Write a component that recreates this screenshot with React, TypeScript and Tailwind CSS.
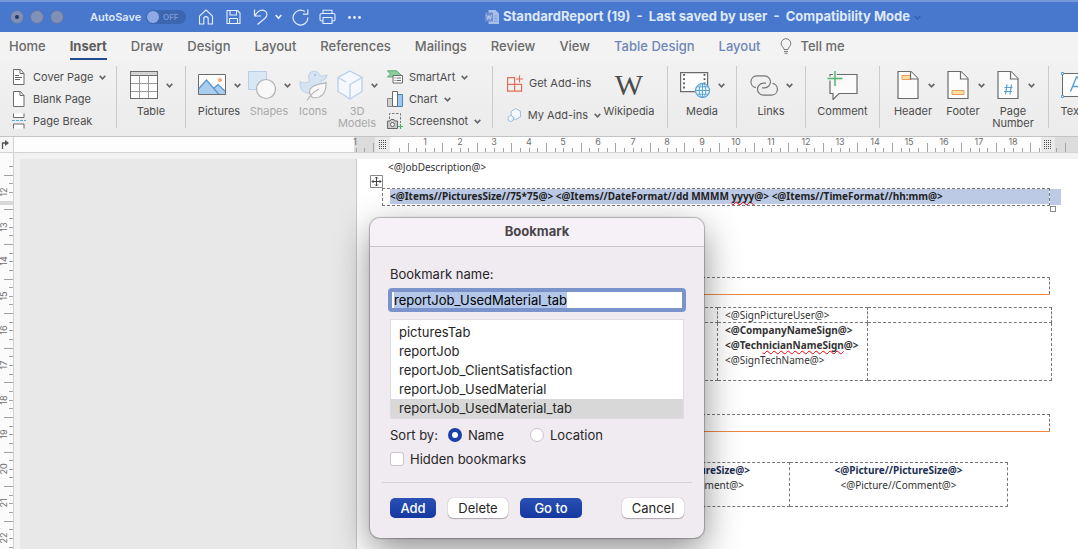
import { useEffect, useRef, useState, type ReactNode } from "react";

const tabs = [
  "Home",
  "Insert",
  "Draw",
  "Design",
  "Layout",
  "References",
  "Mailings",
  "Review",
  "View",
];

const bookmarks = [
  "picturesTab",
  "reportJob",
  "reportJob_ClientSatisfaction",
  "reportJob_UsedMaterial",
  "reportJob_UsedMaterial_tab",
];

const CM = 34.6;

function Chevron() {
  return (
    <svg width="7" height="5" viewBox="0 0 7 5" fill="none" stroke="#666" strokeWidth="1.6" className="shrink-0">
      <path d="M.7.9 3.5 3.8 6.3.9" />
    </svg>
  );
}

function TitleBar() {
  return (
    <header className="flex h-8 items-center border-t-2 border-[#7397d8] bg-[#4878cd] pl-2.5 text-[#dfe8f8]">
      <div className="flex gap-1.5">
        {["Close", "Minimize", "Zoom"].map((name, i) => (
          <button
            key={name}
            aria-label={name}
            className="flex size-3.5 items-center justify-center rounded-full border border-[#5d75a6] bg-[#8091b8]"
          >
            {i === 0 && <span className="size-1 rounded-full bg-[#26385f]" />}
          </button>
        ))}
      </div>
      <span className="ml-6.5 w-14 text-[11px] font-semibold">AutoSave</span>
      <button
        role="switch"
        aria-checked="false"
        aria-label="AutoSave"
        className="flex h-3.5 w-10 items-center rounded-full bg-[#3d66b0] text-[8px] font-medium text-[#7f9fdc]"
      >
        <span className="mr-1 ml-px size-3 rounded-full bg-[#8eaae4]" />
        OFF
      </button>
      <div className="flex items-center">
        <button aria-label="Home" className="ml-3">
          <svg width="16" height="16" viewBox="0 0 16 16" fill="none" stroke="#e6eefb" strokeWidth="1.1">
            <path d="M1.5 7.2 8 1l6.5 6.2V15h-4.3V9.8a2.2 2.2 0 0 0-4.4 0V15H1.5z" strokeLinejoin="round" />
          </svg>
        </button>
        <button aria-label="Save" className="ml-3">
          <svg width="15" height="16" viewBox="0 0 15 16" fill="none" stroke="#e6eefb" strokeWidth="1.1">
            <path d="M1 1.5h10.5L14 4v10.5H1zM4 1.5V6h6.5V1.5M3.5 14.5v-5h8v5" strokeLinejoin="round" />
          </svg>
        </button>
        <button aria-label="Undo" className="ml-3">
          <svg width="16" height="18" viewBox="0 0 16 18" fill="none" stroke="#e6eefb" strokeWidth="1.2">
            <path d="M1.5 1.5V8H8M1.7 7.8C4.5 3.5 8.5 1 11.8 2.8c3 1.7 2.6 5.2.2 7.4l-7.5 6.300" />
          </svg>
        </button>
        <button aria-label="Undo history" className="ml-1.5">
          <svg width="7" height="6" viewBox="0 0 7 6" fill="none" stroke="#e6eefb" strokeWidth="1.6">
            <path d="M.7 1 3.5 4.2 6.3 1" />
          </svg>
        </button>
        <button aria-label="Redo" className="ml-2.5">
          <svg width="17" height="17" viewBox="0 0 17 17" fill="none" stroke="#e6eefb" strokeWidth="1.2">
            <path d="M12.8 2.6A7.4 7.4 0 1 0 15.9 8.5M11 5.2h4.8V.5" />
          </svg>
        </button>
        <button aria-label="Print" className="ml-2.5">
          <svg width="17" height="16" viewBox="0 0 17 16" fill="none" stroke="#e6eefb" strokeWidth="1.1">
            <path d="M4 4.5V1.2h9v3.3M4 12H2.5A1.5 1.5 0 0 1 1 10.5V6a1.5 1.5 0 0 1 1.5-1.5h12A1.5 1.5 0 0 1 16 6v4.5a1.5 1.5 0 0 1-1.5 1.5H13M4 8.5h9v6H4z" />
          </svg>
        </button>
        <button aria-label="More" className="ml-3">
          <svg width="13" height="3" viewBox="0 0 13 3" fill="#e6eefb">
            <circle cx="1.5" cy="1.5" r="1.4" />
            <circle cx="6.5" cy="1.5" r="1.4" />
            <circle cx="11.5" cy="1.5" r="1.4" />
          </svg>
        </button>
      </div>
      <div className="ml-31 flex items-center whitespace-pre">
        <svg width="14" height="14" viewBox="0 0 14 14" className="mr-1">
          <path d="M3.5 0h7L14 3.5V14H3.5z" fill="#a9bfe9" />
          <path d="M9 6h3.500M9 8.5h3.500M9 11h3.500" stroke="#7d9bd9" />
          <path d="M0 2.5h8v9H0z" fill="#6d8fd4" />
          <path d="m1.5 5 1.2 4.300L4 5.500l1.300 3.800L6.500 5" fill="none" stroke="#c3d3f2" strokeWidth=".9" />
        </svg>
        <h1 className="text-[13px] font-bold">
          StandardReport (19)  -  Last saved by user  -  Compatibility Mode
        </h1>
        <svg width="7" height="5" viewBox="0 0 7 5" fill="none" stroke="#3460b3" strokeWidth="1.5" className="ml-1">
          <path d="M.7.9 3.5 3.8 6.3.9" />
        </svg>
      </div>
    </header>
  );
}

function TabBar() {
  return (
    <nav className="flex h-7 items-start gap-6 bg-[#f3f3f3] pt-1 pl-[9px] text-[13px] leading-5 font-medium text-[#6a6a6a]">
      {tabs.map((tab) => (
        <a
          key={tab}
          href="#ribbon"
          className={
            tab === "Insert"
              ? "border-b-3 border-[#234a8e] pb-0.5 font-bold text-[#5c5c5c]"
              : ""
          }
        >
          {tab}
        </a>
      ))}
      <a href="#ribbon" className="whitespace-nowrap text-[#6f86b8]">Table Design</a>
      <a href="#ribbon" className="text-[#6f86b8]">Layout</a>
      <a href="#ribbon" className="-ml-1 flex items-center gap-2 whitespace-nowrap">
        <svg width="12" height="16" viewBox="0 0 12 16" fill="none" stroke="#777" strokeWidth="1">
          <path d="M4 11.5c0-2-2.8-3-2.8-6a4.8 4.8 0 0 1 9.6 0c0 3-2.8 4-2.8 6zM4 13.5h4M4.5 15.3h3" />
        </svg>
        Tell me
      </a>
    </nav>
  );
}

function BigButton({
  icon,
  label,
  arrow = true,
  faded = false,
  className = "w-[50px]",
}: {
  icon: ReactNode;
  label: string;
  arrow?: boolean;
  faded?: boolean;
  className?: string;
}) {
  return (
    <button className={`flex shrink-0 flex-col items-center pt-[3px] ${faded ? "text-[#a9a9a9]" : ""} ${className}`}>
      <span className="flex h-8 shrink-0 items-center gap-2">
        {icon}
        {arrow && <Chevron />}
      </span>
      <span className="mt-1 text-center leading-3">{label}</span>
    </button>
  );
}

function SmallButton({ icon, label, arrow = false }: { icon: ReactNode; label: string; arrow?: boolean }) {
  return (
    <button className="flex h-[22px] shrink-0 items-center gap-1.5 whitespace-nowrap">
      {icon}
      {label}
      {arrow && <Chevron />}
    </button>
  );
}

function Separator() {
  return <div className="w-px shrink-0 self-stretch bg-[#cbcbcb]" />;
}

function DocIcon({ children }: { children?: ReactNode }) {
  return (
    <svg width="28" height="30" viewBox="-5 0 28 30" fill="none" className="shrink-0">
      <path d="M1 1.5h13l7 7v20H1z" fill="#fcfcfc" stroke="#6b6b6b" strokeWidth="1.2" />
      {children}
      <path d="M13.500 1.500v7.500H21" fill="#fcfcfc" stroke="#6b6b6b" strokeWidth="1.2" />
    </svg>
  );
}

function Ribbon() {
  return (
    <div id="ribbon" className="overflow-hidden border-b border-[#c4c4c4] bg-linear-to-b from-[#f2f2f2] to-[#ebebeb] pt-1.5 pb-2 text-[11px] text-[#4c4c4c]">
      <div className="flex h-[62px]">
        <div className="flex w-[116px] shrink-0 flex-col pl-3">
          <SmallButton
            arrow
            icon={
              <svg width="15" height="16" viewBox="2 0 15 16" fill="none" stroke="#6b6b6b">
                <path d="M3.5.5h7l3.5 4v11H3.500z" fill="#fff" />
                <path d="M10 .5v4h4M5 6.5h4M5 8.5h7M5 10.5h5" />
              </svg>
            }
            label="Cover Page"
          />
          <SmallButton
            icon={
              <svg width="15" height="16" viewBox="2 0 15 16" fill="none" stroke="#6b6b6b">
                <path d="M3.5.5h7l3.5 4v11H3.500z" fill="#fff" />
                <path d="M10 .5v4h4" />
              </svg>
            }
            label="Blank Page"
          />
          <SmallButton
            icon={
              <svg width="15" height="16" viewBox="2 0 15 16" fill="none" stroke="#6b6b6b">
                <path d="M3.5.5v4H14v-4M3.5 15.5V11H14v4.500" fill="#fff" />
                <path d="M2 7.5h14" stroke="#57a9d8" strokeDasharray="3 1" />
              </svg>
            }
            label="Page Break"
          />
        </div>
        <Separator />
        <div className="flex w-[68px] shrink-0 justify-center">
          <BigButton
            label="Table"
            icon={
              <svg width="28" height="28" viewBox="0 0 28 28" fill="none" stroke="#6b6b6b">
                <path d="M.5.5h27v27H.5z" fill="#fdfdfd" />
                <path d="M.5.5h27v4H.5z" fill="#d4d6d3" />
                <path d="M.5 12.5h27M.5 20.5h27M9.5 4.500v23M18.500 4.500v23" stroke="#999" />
                <path d="M.5.5h27v27H.5z" />
              </svg>
            }
          />
        </div>
        <Separator />
        <div className="flex w-[306px] shrink-0 pl-2">
          <BigButton
            label="Pictures"
            icon={
              <svg width="28" height="22" viewBox="0 0 28 22" fill="none">
                <path d="M.5.5h27v20H.5z" fill="#fdfdfd" />
                <path d="M.5 15l8-9 7.500 8 4-3.500 7.500 6.500v3.500H.5z" fill="#a9cdee" />
                <path d="M.5 15l8-9L21 20.500M16 14l4-3.500 7.500 7" stroke="#5a94cc" strokeWidth="1.2" />
                <circle cx="22" cy="6" r="2" fill="#f5a873" />
                <path d="M.5.5h27v20H.5z" stroke="#6b6b6b" />
              </svg>
            }
          />
          <BigButton
            faded
            label="Shapes"
            icon={
              <svg width="28" height="29" viewBox="0 0 28 29">
                <path d="M.5.5h18v18H.5z" fill="#d9e6f4" stroke="#b9cee6" />
                <circle cx="18" cy="18" r="9.5" fill="#f8f8f8" stroke="#b4b4b4" strokeWidth="1.2" />
              </svg>
            }
          />
          <BigButton
            faded
            label="Icons"
            arrow={false}
            className="w-[38px]"
            icon={
              <svg width="29" height="31" viewBox="0 0 29 31" strokeWidth="1.1">
                <path
                  d="M1 11.5c2 1.5 5.500 1.500 8.500.5 1.500-.5 1.300-1.500.6-2.600C8.600 6 10.500 1.300 15 1.300c3 0 5 1.700 6 4.500 2.600.5 5.500 0 7-.7-.4 3-2.600 5-5.700 5.600-.6 2.400 1 4 .7 6.500-.5 4-4 6-8 6H9.500C4 23.200.5 18.500 1 11.500z"
                  fill="#d5e3f2"
                  stroke="#c0d3e8"
                />
                <circle cx="16" cy="5" r=".9" fill="#9ab5d3" />
                <path
                  d="M27 12.5c-3 2-15.500 1-16.500 9 0 2.500 1 4.500 3 6 8 1.500 14-3.500 13.500-15z"
                  fill="#f7f7f7"
                  stroke="#b4b4b4"
                />
                <path d="M8 30.5c3-5 7-9 12-11.500" fill="none" stroke="#b4b4b4" />
              </svg>
            }
          />
          <BigButton
            faded
            label="3D Models"
            icon={
              <svg width="26" height="30" viewBox="0 0 26 30" fill="none" stroke="#b9d0e8" strokeWidth="1.3">
                <path d="M13 1 25 7.500v14L13 29 1 21.500v-14z" fill="#f4f7fb" />
                <path d="M13 29V14.500L25 7.500M1 7.500 9 12" />
              </svg>
            }
          />
          <div className="ml-[5px] flex flex-col">
            <SmallButton
              arrow
              label="SmartArt"
              icon={
                <svg width="16" height="14" viewBox="0 0 16 14" fill="none">
                  <path d="M.5.8h9L14 5l-4.500 2H.5l3-3z" fill="#8ccf9f" stroke="#58ab70" />
                  <path d="M6 5.500h9.500v7.500H6z" fill="#fff" stroke="#6b6b6b" />
                  <path d="M7.500 8h1M9.500 8h4.500M7.500 10.500h1M9.500 10.500h4.500" stroke="#6b6b6b" />
                </svg>
              }
            />
            <SmallButton
              arrow
              label="Chart"
              icon={
                <svg width="16" height="16" viewBox="0 0 16 16">
                  <path d="M.5 7.5h5v8h-5z" fill="#cfd1cf" stroke="#888" />
                  <path d="M10.5 3.5h5v12h-5z" fill="#9cc8ef" stroke="#4a86c0" />
                  <path d="M5.5.5h5v15h-5z" fill="#fff" stroke="#6b6b6b" />
                </svg>
              }
            />
            <SmallButton
              arrow
              label="Screenshot"
              icon={
                <svg width="16" height="16" viewBox="0 0 16 16" fill="none">
                  <path d="M2.5 6V.5h11V10" stroke="#777" strokeDasharray="2.5 1.5" />
                  <path d="M.5 8H3l1-1.500h3L8 8h2.500v7.500H.5z" fill="#c9c9c9" stroke="#666" />
                  <circle cx="5.5" cy="11.5" r="2" fill="#fff" stroke="#666" />
                  <path d="M13.500 11v5M11 13.500h5" stroke="#45b06a" strokeWidth="1.2" />
                </svg>
              }
            />
          </div>
        </div>
        <Separator />
        <div className="flex w-[174px] shrink-0 pl-3.5">
          <div className="flex w-[94px] shrink-0 flex-col gap-2.5 pt-1.5">
            <SmallButton
              label="Get Add-ins"
              icon={
                <svg width="16" height="17" viewBox="0 0 16 17" fill="none" stroke="#e0705a" strokeWidth="1.2">
                  <path d="M.6 2.6h7v13.500h-7zM.6 9.300h14v6.800H.6zM12.500.5v7M9 4h7" />
                </svg>
              }
            />
            <SmallButton
              arrow
              label="My Add-ins"
              icon={
                <svg width="16" height="16" viewBox="0 0 16 16" fill="#f5f9fd" stroke="#8fb6df">
                  <path d="m9.500 1 5.200 3v6L9.500 13l-5-3V4z" />
                  <path d="m4 8.500 2.900 1.700v3.400L4 15.300l-2.800-1.700v-3.400z" />
                </svg>
              }
            />
          </div>
          <BigButton
            label="Wikipedia"
            arrow={false}
            className="w-[56px]"
            icon={<span className="font-['Liberation_Serif',serif] text-[30px] leading-7">W</span>}
          />
        </div>
        <Separator />
        <div className="flex w-[68px] shrink-0 justify-center">
          <BigButton
            label="Media"
            icon={
              <svg width="30" height="26" viewBox="0 0 30 26" fill="none">
                <path d="M.6.6h27v19H.6z" fill="#fdfdfd" stroke="#6b6b6b" strokeWidth="1.2" />
                <path d="M4 2v16M24.500 2v16" stroke="#555" strokeWidth="1.8" strokeDasharray="1.8 2.4" />
                <circle cx="22.5" cy="18.5" r="7" fill="#eef6fc" stroke="#5aa5d8" strokeWidth="1.2" />
                <path d="M22.500 11.500v14M15.500 18.500h14M17 14.800h11M17 22.200h11" stroke="#5aa5d8" />
                <ellipse cx="22.5" cy="18.5" rx="3.3" ry="7" stroke="#5aa5d8" />
              </svg>
            }
          />
        </div>
        <Separator />
        <div className="flex w-[68px] shrink-0 justify-center">
          <BigButton
            label="Links"
            icon={
              <svg width="28" height="21" viewBox="0 0 28 21" fill="none" stroke="#777" strokeWidth="1.2">
                <path d="M6 12.700A6 6 0 0 1 6.500.8h8a6 6 0 0 1 0 12H12" />
                <path d="M22.500 8.300a6 6 0 0 1-1 11.900h-8a6 6 0 0 1 0-12H16" />
              </svg>
            }
          />
        </div>
        <Separator />
        <div className="flex w-[73px] shrink-0 justify-center">
          <BigButton
            label="Comment"
            arrow={false}
            icon={
              <svg width="31" height="30" viewBox="0 0 31 30" fill="none">
                <path d="M3 4.500h27v19H12l-6 6v-6H3z" fill="#fbfbfb" stroke="#6b6b6b" strokeWidth="1.2" />
                <path d="M8 1v15M.5 8.500h15" stroke="#f0f0f0" strokeWidth="4" />
                <path d="M8 1v15M.5 8.500h15" stroke="#4fb673" strokeWidth="1.4" />
              </svg>
            }
          />
        </div>
        <Separator />
        <div className="flex w-[168px] shrink-0 pl-2">
          <BigButton
            label="Header"
            icon={
              <DocIcon>
                <path d="M5 5.500h9v4H5z" fill="#fbdf9f" stroke="#eb9c64" />
              </DocIcon>
            }
          />
          <BigButton
            label="Footer"
            icon={
              <DocIcon>
                <path d="M5 20.500h12v4H5z" fill="#fbdf9f" stroke="#eb9c64" />
              </DocIcon>
            }
          />
          <BigButton
            label="Page Number"
            icon={
              <DocIcon>
                <path d="M10 14.500l-1.500 10M14.500 14.500l-1.500 10M7.500 17.500h8M7 21.500h8" stroke="#5a9fd4" strokeWidth="1.2" />
              </DocIcon>
            }
          />
        </div>
        <Separator />
        <BigButton
          label="Text Box"
          className="ml-2.5 w-[48px] whitespace-nowrap"
          icon={
            <svg width="29" height="26" viewBox="0 0 29 26" fill="none">
              <path d="M1.500 1.500h26v23h-26z" fill="#fdfdfd" stroke="#6b6b6b" />
              <path d="M9.500 19.500l6-14.500h1l6 14.500M12 14.500h9" stroke="#5a9fd4" strokeWidth="1.4" />
              <path d="M.5.5h2v2h-2zM.5 23.500h2v2h-2zM26 .5h2v2h-2zM26 23.500h2v2h-2z" fill="#fff" stroke="#5a9fd4" />
            </svg>
          }
        />
      </div>
    </div>
  );
}

function HorizontalRuler() {
  const start = 390.3;
  const ticks = Array.from({ length: 83 }, (_, i) => i - 4);
  return (
    <svg className="block h-4 w-full" fill="#6e6e6e" fontSize="9">
      <rect width="100%" height="16" fill="#fdfdfd" />
      <rect x="354" width="21" height="16" fill="#dcdcdc" />
      <rect x="375" width="15" height="16" fill="#eaeaea" />
      <rect x="1041" width="14" height="16" fill="#eaeaea" />
      <rect x="1055" width="100%" height="16" fill="#dcdcdc" />
      {ticks.map((i) => {
        const x = Math.round(start + (i * CM) / 4);
        if ((x > 374 && x < 391) || (x > 1040 && x < 1056)) return null;
        const half = Math.abs(i % 4) === 2;
        return <rect key={i} x={x} y={half ? 6 : 11} width="1" height={half ? 9 : 4} fill="#a3a3a3" />;
      })}
      {[380, 1045].map((x) => (
        <g key={x} stroke="#555" strokeDasharray="1 1">
          {[3, 5, 7, 9, 11].map((y) => (
            <path key={y} d={`M${x - 1} ${y}.5h8`} />
          ))}
        </g>
      ))}
      <text x="355" y="8" textAnchor="middle">1</text>
      {Array.from({ length: 18 }, (_, i) => (
        <text key={i} x={Math.round(start + (i + 1) * CM)} y="8" textAnchor="middle">
          {i + 1}
        </text>
      ))}
      <rect width="14" height="16" fill="#f6f6f6" />
      <path d="M2.500 12V6h4" fill="none" stroke="#555" strokeWidth="1.3" />
      <path d="M5 3v6l4-3z" fill="#555" />
      <path d="M13.500 0v16M0 15.500h2000" stroke="#d2d2d2" />
    </svg>
  );
}

function VerticalRuler() {
  const first = 39;
  const ticks = Array.from({ length: 46 }, (_, i) => i - 3);
  return (
    <svg className="h-full w-3.5 shrink-0" fill="#6e6e6e" fontSize="9">
      <rect width="14" height="100%" fill="#fbfbfb" />
      {ticks.map((i) => {
        const half = Math.abs(i % 4) === 2;
        const y = Math.round(first + (i * CM) / 4);
        return <rect key={i} x={half ? 4 : 9} y={y} width={half ? 9 : 4} height="1" fill="#a3a3a3" />;
      })}
      {Array.from({ length: 11 }, (_, i) => {
        const y = Math.round(first + i * CM);
        return (
          <text key={i} x="7" y={y} textAnchor="middle" transform={`rotate(-90 7 ${y})`}>
            {i + 12}
          </text>
        );
      })}
      <rect y="48" width="14" height="4" fill="#d8d8d8" />
      <path d="M13.500 0v2000" stroke="#d2d2d2" />
    </svg>
  );
}

const dashed = "border border-dashed border-[#777]";
const misspelt =
  "underline decoration-red-600 decoration-wavy decoration-1 [text-decoration-skip-ink:none]";

function SectionBar({ className }: { className: string }) {
  return (
    <div className={`mr-7 border-b border-[#ee8845] ${className}`}>
      <div className="h-[17px] border border-b-0 border-dashed border-[#777]" />
    </div>
  );
}

function Page() {
  return (
    <article className="relative min-w-0 flex-1 overflow-hidden border-l border-[#c8c8c8] bg-white pl-[25px] font-['Noto_Sans','Open_Sans',sans-serif] text-[10px] leading-[15px] text-[#333]">
      <p className="px-1.5 pt-px">&lt;@JobDescription@&gt;</p>
      <div className="relative mt-[13px] mr-7">
        {/* table move handle */}
        <svg width="13" height="13" viewBox="0 0 13 13" className="absolute -top-[13px] -left-3" fill="none" stroke="#444">
          <path d="M.5.5h12v12H.5z" fill="#fff" stroke="#888" />
          <path d="M6.500 2v9M2 6.500h9M5 3.500l1.500-1.500L8 3.500M5 9.500 6.500 11 8 9.500M3.500 5 2 6.500 3.500 8M9.500 5 11 6.500 9.500 8" />
        </svg>
        <table className="w-full border-collapse text-black">
          <tbody>
            <tr>
              <td className={`h-[17px] p-0 pl-[7px] align-top ${dashed}`}>
                <div className="bg-[#bccae6] font-bold whitespace-nowrap text-[#222]">
                  &lt;@Items//PicturesSize//75*75@&gt; &lt;@Items//DateFormat//dd MMMM{" "}
                  <span className={misspelt}>yyyy</span>@&gt;
                  {" "}&lt;@Items//TimeFormat//hh:mm@&gt;
                </div>
              </td>
            </tr>
          </tbody>
        </table>
        <div className="absolute top-px left-full h-4 w-[11px] bg-[#bccae6]" />
        <div className="absolute top-[18px] left-full size-1.5 border border-[#888] bg-white" />
      </div>

      <SectionBar className="mt-[71px]" />

      <table className="mt-3 w-[670px] table-fixed border-collapse">
        <tbody>
          <tr>
            <td className={`h-[15px] w-[335px] p-0 ${dashed}`} />
            <td className={`w-[150px] p-0 pl-[7px] leading-[14px] ${dashed}`}>&lt;@SignPictureUser@&gt;</td>
            <td className={`p-0 ${dashed}`} />
          </tr>
          <tr>
            <td className={`h-[58px] p-0 ${dashed}`} />
            <td className={`p-0 pl-[7px] align-top whitespace-nowrap ${dashed}`}>
              <p className="font-bold">&lt;@CompanyNameSign@&gt;</p>
              <p className="font-bold">
                &lt;@Tech
                <span className={misspelt}>nicianNameSign</span>@&gt;
              </p>
              <p>&lt;@SignTechName@&gt;</p>
            </td>
            <td className={`p-0 ${dashed}`} />
          </tr>
        </tbody>
      </table>

      <SectionBar className="mt-[33px]" />

      <table className="mt-[30px] w-[625px] table-fixed border-collapse text-center">
        <tbody>
          <tr>
            <td className={`h-[44px] w-[200px] p-0 ${dashed}`} />
            {["w-[207px]", "w-[218px]"].map((w) => (
              <td key={w} className={`p-0 align-top ${dashed} ${w}`}>
                <p className="font-bold text-[#1d2f52]">&lt;@Picture//PictureSize@&gt;</p>
                <p>&lt;@Picture//Comment@&gt;</p>
              </td>
            ))}
          </tr>
        </tbody>
      </table>
    </article>
  );
}

const plainButton =
  "h-5 rounded-[5px] bg-white text-center text-[#262626] shadow-[0_0_1px_rgba(0,0,0,0.4),0_1px_1px_rgba(0,0,0,0.25)]";
const blueButton =
  "h-5 rounded-[5px] bg-linear-to-b from-[#2a50b4] to-[#1438a0] text-center font-medium text-white";

function BookmarkDialog() {
  const nameRef = useRef<HTMLInputElement>(null);
  const [selected, setSelected] = useState(bookmarks[4]);

  useEffect(() => {
    nameRef.current?.focus();
    nameRef.current?.select();
  }, []);

  const pick = (name: string) => {
    setSelected(name);
    if (nameRef.current) nameRef.current.value = name;
  };

  return (
    <div
      role="dialog"
      aria-labelledby="bookmark-title"
      className="w-[334px] overflow-hidden rounded-[10px] bg-[#f0eaf1] text-[13px] leading-4 text-[#262626] shadow-[0_0_1px_1px_rgba(0,0,0,0.25),0_12px_36px_rgba(0,0,0,0.45)]"
    >
      <h2 id="bookmark-title" className="h-[29px] border-b border-[#c9c4ca] bg-[#f6f0f7] text-center leading-[27px] font-bold text-[#4a464b]">
        Bookmark
      </h2>
      <form className="px-5 pt-[19px] pb-5" onSubmit={(e) => e.preventDefault()}>
        <label htmlFor="bookmark-name" className="block">Bookmark name:</label>
        <input
          id="bookmark-name"
          ref={nameRef}
          defaultValue={bookmarks[4]}
          className="mt-2 block h-5 w-full rounded-xs border-2 border-[#7b93cb] bg-white px-0.5 ring-2 ring-[#7b93cb] outline-none selection:bg-[#b3c7e8] selection:text-black"
        />
        <ul role="listbox" aria-label="Bookmarks" className="mt-[9px] border border-[#dfdbe0] bg-white pt-[3px]">
          {bookmarks.map((name) => (
            <li
              key={name}
              role="option"
              aria-selected={name === selected}
              onClick={() => pick(name)}
              className={`h-[19px] px-2 leading-[19px] ${name === selected ? "bg-[#d8d8d8]" : ""}`}
            >
              {name}
            </li>
          ))}
        </ul>
        <div className="mt-2 flex items-center">
          <span className="w-[58px]">Sort by:</span>
          <label className="flex w-[82px] items-center gap-1.5">
            <input
              type="radio"
              name="sort"
              defaultChecked
              className="size-3.5 appearance-none rounded-full border border-[#c8c4c9] bg-white checked:border-4 checked:border-[#1c40a8]"
            />
            Name
          </label>
          <label className="flex items-center gap-1.5">
            <input
              type="radio"
              name="sort"
              className="size-3.5 appearance-none rounded-full border border-[#c8c4c9] bg-white checked:border-4 checked:border-[#1c40a8]"
            />
            Location
          </label>
        </div>
        <label className="mt-2 flex items-center gap-1.5">
          <input
            type="checkbox"
            className="size-3.5 appearance-none rounded-[3px] border border-[#c8c4c9] bg-white checked:bg-[#1c40a8]"
          />
          Hidden bookmarks
        </label>
        <hr className="-mx-2 mt-[15px] border-[#d5d0d6]" />
        <div className="mt-[15px] flex gap-3">
          <button type="submit" className={`w-[46px] ${blueButton}`}>Add</button>
          <button type="button" className={`w-[60px] ${plainButton}`}>Delete</button>
          <button type="button" className={`w-[62px] ${blueButton}`}>Go to</button>
          <button type="button" className={`ml-auto w-[62px] ${plainButton}`}>Cancel</button>
        </div>
      </form>
    </div>
  );
}

export default function App() {
  return (
    <div className="relative flex h-screen flex-col overflow-hidden bg-[#f2f2f2] font-['Inter',sans-serif]">
      <TitleBar />
      <TabBar />
      <Ribbon />
      <HorizontalRuler />
      <main className="flex min-h-0 flex-1">
        <VerticalRuler />
        <div className="flex min-w-0 flex-1 pt-1.5 pl-1.5">
          <div className="w-[336px] shrink-0 bg-[#e8e8e8]" />
          <Page />
        </div>
      </main>
      <div className="absolute inset-x-0 top-[218px] flex justify-center pr-1">
        <BookmarkDialog />
      </div>
    </div>
  );
}
